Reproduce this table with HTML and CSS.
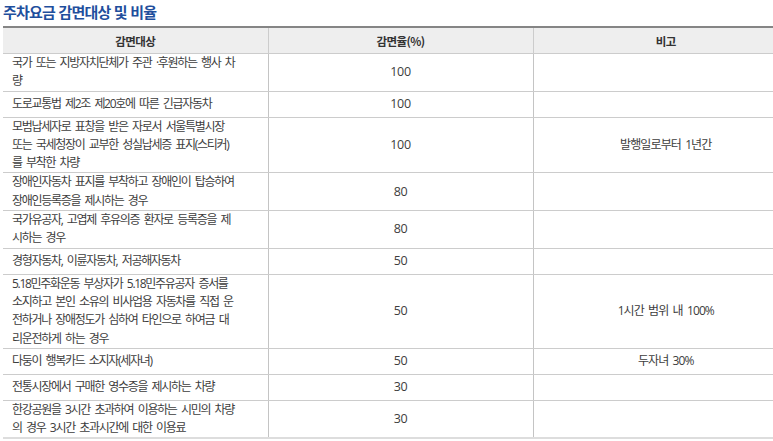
FILE: index.html
```html
<!DOCTYPE html>
<html lang="ko">
<head>
<meta charset="utf-8">
<title>주차요금 감면대상 및 비율</title>
<link rel="stylesheet" href="styles.css">
</head>
<body>
<h2 class="title">주차요금 감면대상 및 비율</h2>
<table class="rate-table">
  <colgroup>
    <col class="c1"><col class="c2"><col class="c3">
  </colgroup>
  <thead>
    <tr><th>감면대상</th><th>감면율(%)</th><th>비고</th></tr>
  </thead>
  <tbody>
    <tr><td class="target">국가 또는 지방자치단체가 주관 ·후원하는 행사 차<br>량</td><td class="num">100</td><td class="note"></td></tr>
    <tr><td class="target">도로교통법 제2조 제20호에 따른 긴급자동차</td><td class="num">100</td><td class="note"></td></tr>
    <tr><td class="target">모범납세자로 표창을 받은 자로서 서울특별시장<br>또는 국세청장이 교부한 성실납세증 표지(스티커)<br>를 부착한 차량</td><td class="num">100</td><td class="note">발행일로부터 1년간</td></tr>
    <tr><td class="target">장애인자동차 표지를 부착하고 장애인이 탑승하여<br>장애인등록증을 제시하는 경우</td><td class="num">80</td><td class="note"></td></tr>
    <tr><td class="target">국가유공자, 고엽제 후유의증 환자로 등록증을 제<br>시하는 경우</td><td class="num">80</td><td class="note"></td></tr>
    <tr><td class="target">경형자동차, 이륜자동차, 저공해자동차</td><td class="num">50</td><td class="note"></td></tr>
    <tr><td class="target">5.18민주화운동 부상자가 5.18민주유공자 증서를<br>소지하고 본인 소유의 비사업용 자동차를 직접 운<br>전하거나 장애정도가 심하여 타인으로 하여금 대<br>리운전하게 하는 경우</td><td class="num">50</td><td class="note">1시간 범위 내 100%</td></tr>
    <tr><td class="target">다둥이 행복카드 소지자(세자녀)</td><td class="num">50</td><td class="note">두자녀 30%</td></tr>
    <tr><td class="target">전통시장에서 구매한 영수증을 제시하는 차량</td><td class="num">30</td><td class="note"></td></tr>
    <tr><td class="target">한강공원을 3시간 초과하여 이용하는 시민의 차량<br>의 경우 3시간 초과시간에 대한 이용료</td><td class="num">30</td><td class="note"></td></tr>
  </tbody>
</table>
</body>
</html>
```

FILE: styles.css
```css
html, body {
  margin: 0;
  padding: 0;
  background: #ffffff;
  overflow: hidden;
}
body {
  font-family: "Open Sans", "Noto Sans CJK KR", sans-serif;
  color: #3d3d3d;
  padding-left: 3px;
}
.title {
  margin: 0;
  height: 26px;
  line-height: 23px;
  font-family: "Noto Sans CJK KR", sans-serif;
  font-size: 15px;
  font-weight: bold;
  letter-spacing: -0.8px;
  color: #1f4f9d;
}
.rate-table {
  border-collapse: collapse;
  table-layout: fixed;
  width: 795px;
  font-size: 12px;
  letter-spacing: -1.3px;
  word-spacing: 2.5px;
}
.rate-table col { width: 265px; }
.rate-table th {
  height: 25px;
  padding: 0;
  background: #eeeeee;
  border-top: 2px solid #858585;
  border-bottom: 1px solid #cccccc;
  border-left: 1px solid #cccccc;
  font-family: "Noto Sans CJK KR", sans-serif;
  font-size: 11.5px;
  letter-spacing: -0.6px;
  word-spacing: 0;
  font-weight: bold;
  color: #333333;
  text-align: center;
  vertical-align: middle;
}
.rate-table th:first-child,
.rate-table td:first-child { border-left: none; }
.rate-table td {
  height: 25px;
  padding: 0 4px 0 9px;
  line-height: 18.3px;
  border-bottom: 1px solid #cccccc;
  border-left: 1px solid #c4c4c4;
  vertical-align: middle;
  white-space: nowrap;
}
.rate-table tbody tr:last-child td { border-bottom: 2px solid #dddddd; }
.rate-table td.num,
.rate-table td.note {
  text-align: center;
  padding: 0;
}
.rate-table td.num {
  font-size: 12.5px;
  letter-spacing: -0.3px;
}
.rate-table td.note {
  letter-spacing: -0.9px;
  word-spacing: 2px;
}
```
